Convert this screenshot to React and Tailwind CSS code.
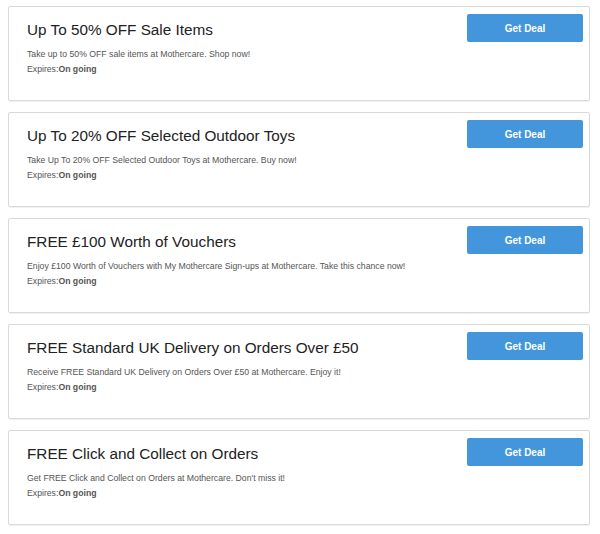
import React from "react";

const deals = [
  {
    title: "Up To 50% OFF Sale Items",
    desc: "Take up to 50% OFF sale items at Mothercare. Shop now!",
  },
  {
    title: "Up To 20% OFF Selected Outdoor Toys",
    desc: "Take Up To 20% OFF Selected Outdoor Toys at Mothercare. Buy now!",
  },
  {
    title: "FREE £100 Worth of Vouchers",
    desc: "Enjoy £100 Worth of Vouchers with My Mothercare Sign-ups at Mothercare. Take this chance now!",
  },
  {
    title: "FREE Standard UK Delivery on Orders Over £50",
    desc: "Receive FREE Standard UK Delivery on Orders Over £50 at Mothercare. Enjoy it!",
  },
  {
    title: "FREE Click and Collect on Orders",
    desc: "Get FREE Click and Collect on Orders at Mothercare. Don't miss it!",
  },
];

export default function App() {
  return (
    <div
      className="w-[600px] h-[534px] bg-white pt-[6px] pl-[8px] flex flex-col gap-[11px]"
      style={{ fontFamily: '"Liberation Sans", Arial, sans-serif' }}
    >
      {deals.map((d) => (
        <div
          key={d.title}
          className="w-[582px] h-[95px] border border-[#d9d9d9] rounded-[2px] shadow-[0_1px_1px_rgba(0,0,0,0.06)] flex justify-between pl-[18px] pr-[6px] pt-[7px]"
        >
          <div className="flex flex-col">
            <div className="text-[15.3px] leading-[30px] text-[#222] mt-[1px]">{d.title}</div>
            <div className="text-[8.7px] leading-[14px] text-[#555] mt-[2px]">{d.desc}</div>
            <div className="text-[8.7px] leading-[14px] text-[#555] mt-[1px]">
              Expires:<span className="font-bold">On going</span>
            </div>
          </div>
          <button className="w-[116px] h-[28px] bg-[#4396dc] rounded-[2px] text-white text-[10px] font-bold">
            Get Deal
          </button>
        </div>
      ))}
    </div>
  );
}
